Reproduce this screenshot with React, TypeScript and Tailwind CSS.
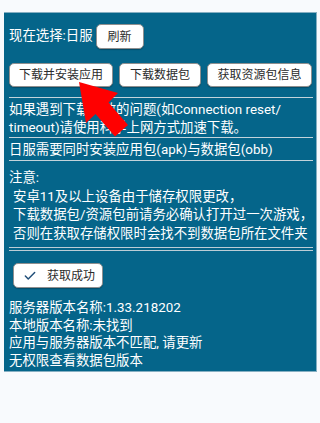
import { Check } from 'lucide-react';

const btn =
  'flex items-center justify-center bg-white border border-[#8f8f8f] rounded-[5px] text-[12px] text-[#2b2b2b] shadow-[0_1px_1px_rgba(0,0,0,0.25)]';

export default function App() {
  return (
    <div className="relative min-h-screen bg-[#f8fafd] pt-[12px] pl-[4px] pr-[3px] font-['Roboto','Noto_Sans_CJK_SC',sans-serif]">
      <div className="bg-[#05658a] border-t border-r border-b border-[#86afc2] pl-[5px] pr-[3px] pb-[2px] text-[13.4px] text-white">
        {/* current server */}
        <div className="flex items-center pt-[11px]">
          <span>现在选择:日服</span>
          <button className={`${btn} ml-[3px] w-[48px] h-[25px]`}>刷新</button>
        </div>

        <div className="flex mt-[14px] gap-[7px]">
          <button className={`${btn} w-[104px] h-[24px]`}>下载并安装应用</button>
          <button className={`${btn} w-[82px] h-[24px] -ml-px`}>下载数据包</button>
          <button className={`${btn} w-[105px] h-[24px] -ml-px`}>获取资源包信息</button>
        </div>

        <div className="mt-[10px] h-px bg-[#c3d3db]" />
        <p className="pt-[3px] leading-[18px] whitespace-nowrap">
          如果遇到下载失败的问题(如Connection reset/
          <br />
          timeout)请使用科学上网方式加速下载。
        </p>
        <div className="h-px bg-[#c3d3db]" />
        <p className="pt-[3px] pb-[1px] leading-[18px]">日服需要同时安装应用包(apk)与数据包(obb)</p>
        <div className="h-px bg-[#c3d3db]" />

        <div className="pt-[8px] leading-[18.5px] whitespace-nowrap">
          <p>注意:</p>
          <p className="pl-[4px]">安卓11及以上设备由于储存权限更改，</p>
          <p className="pl-[4px]">下载数据包/资源包前请务必确认打开过一次游戏，</p>
          <p className="pl-[4px]">否则在获取存储权限时会找不到数据包所在文件夹</p>
        </div>
        <div className="mt-[4px] flex flex-col gap-[2px]">
          <div className="h-px bg-[#bccdd6]" />
          <div className="h-px bg-[#bccdd6]" />
        </div>

        <button className={`${btn} mt-[12px] ml-[4px] w-[90px] h-[25px] justify-start pl-[9px] gap-[10px]`}>
          <Check className="w-[14px] h-[14px] text-[#1f4d78]" strokeWidth={2.5} />
          <span>获取成功</span>
        </button>

        <div className="mt-[11px] leading-[17.5px]">
          <p>服务器版本名称:1.33.218202</p>
          <p>本地版本名称:未找到</p>
          <p>应用与服务器版本不匹配, 请更新</p>
          <p>无权限查看数据包版本</p>
        </div>
      </div>

      {/* red annotation arrow */}
      <svg className="absolute left-0 top-0 pointer-events-none" width="320" height="423" viewBox="0 0 320 423">
        <polygon
          points="79,82 118,93 108.5,102.5 128,125 115,136.5 95.5,114 86,123"
          fill="#ff0000"
        />
      </svg>
    </div>
  );
}
